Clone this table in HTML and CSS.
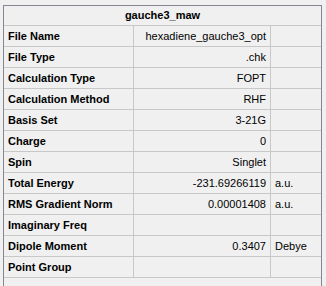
FILE: index.html
```html
<!DOCTYPE html>
<html lang="en">

<head>
    <meta charset="UTF-8">
    <title>gauche3_maw</title>
    <link rel="stylesheet" href="styles.css">
</head>

<body>
    <!-- Summary grid for the job -->
    <div class="summary-frame">
        <table class="summary">
            <colgroup>
                <col class="col-key">
                <col class="col-val">
                <col class="col-unit">
            </colgroup>
            <tr>
                <th colspan="3" class="title">gauche3_maw</th>
            </tr>
            <tr><td class="key">File Name</td><td class="val">hexadiene_gauche3_opt</td><td class="unit"></td></tr>
            <tr><td class="key">File Type</td><td class="val">.chk</td><td class="unit"></td></tr>
            <tr><td class="key">Calculation Type</td><td class="val">FOPT</td><td class="unit"></td></tr>
            <tr><td class="key">Calculation Method</td><td class="val">RHF</td><td class="unit"></td></tr>
            <tr><td class="key">Basis Set</td><td class="val">3-21G</td><td class="unit"></td></tr>
            <tr><td class="key">Charge</td><td class="val">0</td><td class="unit"></td></tr>
            <tr><td class="key">Spin</td><td class="val">Singlet</td><td class="unit"></td></tr>
            <tr><td class="key">Total Energy</td><td class="val">-231.69266119</td><td class="unit">a.u.</td></tr>
            <tr><td class="key">RMS Gradient Norm</td><td class="val">0.00001408</td><td class="unit">a.u.</td></tr>
            <tr><td class="key">Imaginary Freq</td><td class="val"></td><td class="unit"></td></tr>
            <tr><td class="key">Dipole Moment</td><td class="val">0.3407</td><td class="unit">Debye</td></tr>
            <tr><td class="key">Point Group</td><td class="val"></td><td class="unit"></td></tr>
        </table>
    </div>
</body>

</html>
```

FILE: styles.css
```css
body {
    margin: 0;
    padding: 0;
    background-color: #f0f0f0;
    font-family: 'Liberation Sans', Arial, sans-serif;
    font-size: 11px;
    color: #000;
    overflow: hidden;
}

.summary-frame {
    margin: 5px 0 0 3px;
    width: 317px;
    height: 290px;
    border: 1px solid #828790;
    border-bottom: none;
}

.summary {
    border-collapse: separate;
    border-spacing: 0;
    width: 317px;
    table-layout: fixed;
}

.col-key {
    width: 130px;
}

.col-val {
    width: 137px;
}

.col-unit {
    width: 50px;
}

.summary th,
.summary td {
    padding: 0 4px;
    border-bottom: 1px solid #c8c8c8;
    white-space: nowrap;
    overflow: hidden;
    box-sizing: border-box;
    line-height: 13px;
}

.summary .title {
    height: 20px;
    text-align: center;
    font-weight: bold;
}

.summary td {
    height: 21px;
}

.key {
    font-weight: bold;
    text-align: left;
    border-right: 1px solid #c8c8c8;
}

.val {
    text-align: right;
    border-right: 1px solid #c8c8c8;
}

.unit {
    text-align: left;
}
```
